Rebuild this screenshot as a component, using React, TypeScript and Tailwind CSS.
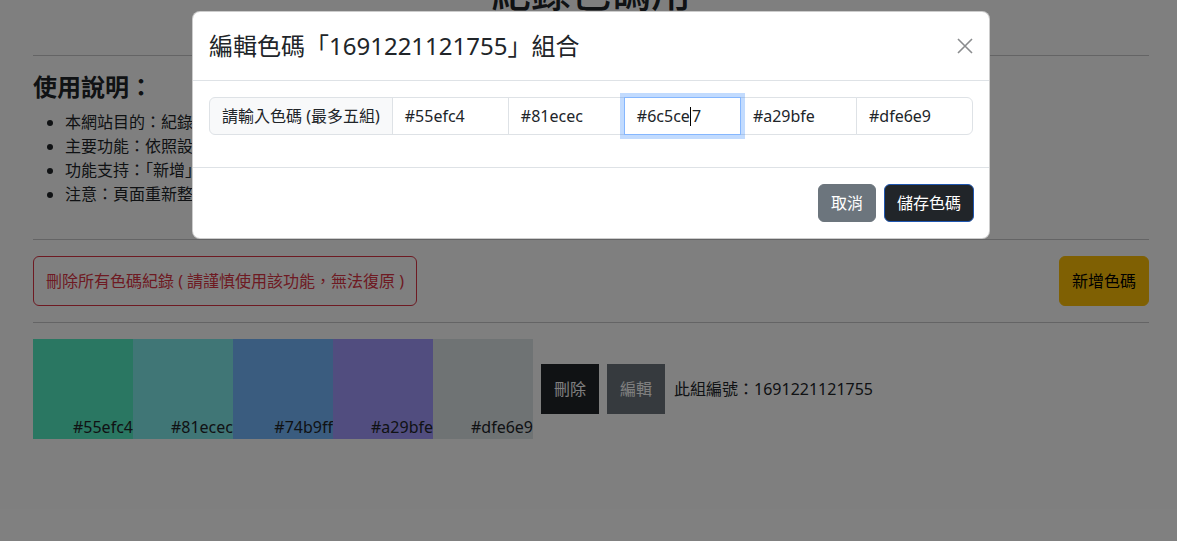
import React from "react";

const swatches = ["#55efc4", "#81ecec", "#74b9ff", "#a29bfe", "#dfe6e9"];
const inputs = ["#55efc4", "#81ecec", "#6c5ce7", "#a29bfe", "#dfe6e9"];

export default function App() {
  return (
    <div className="relative h-[541px] w-full overflow-hidden bg-white font-['Noto_Sans','Noto_Sans_CJK_TC',sans-serif] text-[#212529]">
      <div className="ml-[33px] w-[1116px]">
        <h1 className="mt-[-32px] text-center text-[40px] leading-[48px] font-medium">紀錄色碼用</h1>
        <hr className="mt-[39px] mb-4 border-t border-[#c8c9ca]" />
        <h4 className="mb-[9px] text-[24px] leading-[29px] font-bold">使用說明：</h4>
        <ul className="mb-[33px] list-disc pl-8 text-base leading-6">
          <li>本網站目的：紀錄喜歡的色碼組合，方便日後查詢使用</li>
          <li>主要功能：依照設定的色碼顯示顏色區塊與色碼</li>
          <li>功能支持：「新增」、「編輯」、「刪除」色碼組合</li>
          <li>注意：頁面重新整理後資料仍會保留於瀏覽器中</li>
        </ul>
        <hr className="mb-4 border-t border-[#c8c9ca]" />
        <div className="flex items-center justify-between">
          <button className="rounded-md border border-[#dc3545] px-3 py-3 text-base leading-6 text-[#dc3545]">
            刪除所有色碼紀錄 ( 請謹慎使用該功能，無法復原 )
          </button>
          <button className="rounded-md border border-[#ffc107] bg-[#ffc107] px-3 py-3 text-base leading-6 text-black">
            新增色碼
          </button>
        </div>
        <hr className="my-4 border-t border-[#c8c9ca]" />
        <div className="flex items-center">
          <div className="flex">
            {swatches.map((c) => (
              <div
                key={c}
                className="flex h-[100px] w-[100px] items-end justify-end text-base leading-6"
                style={{ backgroundColor: c }}
              >
                {c}
              </div>
            ))}
          </div>
          <button className="ml-2 border border-[#212529] bg-[#212529] px-3 py-3 text-base leading-6 text-white">刪除</button>
          <button className="ml-2 border border-[#6c757d] bg-[#6c757d] px-3 py-3 text-base leading-6 text-white">編輯</button>
          <span className="ml-[9px] text-base leading-6">此組編號：1691221121755</span>
        </div>
      </div>

      <div className="absolute inset-0 bg-black/50" />

      <div className="absolute left-[192px] top-[11px] w-[798px] rounded-lg border border-black/20 bg-white">
        <div className="flex items-center justify-between border-b border-[#dee2e6] p-4">
          <h5 className="text-[24px] leading-[36px] font-normal">編輯色碼「1691221121755」組合</h5>
          <button className="flex h-4 w-4 items-center justify-center">
            <svg width="16" height="16" viewBox="0 0 16 16">
              <path d="M1 1 L15 15 M15 1 L1 15" stroke="#8a8c8e" strokeWidth="1.6" fill="none" />
            </svg>
          </button>
        </div>
        <div className="border-b border-[#dee2e6] p-4">
          <div className="mb-4 flex h-[38px] w-full rounded-md">
            <div className="flex items-center rounded-l-md border border-[#dee2e6] bg-[#f8f9fa] px-3 text-base leading-6 whitespace-nowrap">
              請輸入色碼 (最多五組)
            </div>
            {inputs.map((v, i) => {
              const focused = i === 2;
              const last = i === inputs.length - 1;
              return (
                <div
                  key={i}
                  className={
                    focused
                      ? "relative z-10 ml-[-1px] flex flex-1 items-center border border-[#86b7fe] bg-white px-3 text-base leading-6 shadow-[0_0_0_4px_rgba(13,110,253,0.25)]"
                      : last
                      ? "ml-[-1px] flex flex-1 items-center rounded-r-md border border-[#dee2e6] bg-white px-3 text-base leading-6"
                      : "ml-[-1px] flex flex-1 items-center border border-[#dee2e6] bg-white px-3 text-base leading-6"
                  }
                >
                  {focused ? (
                    <span className="flex items-center">
                      #6c5ce<span className="mx-[0.5px] inline-block h-[19px] w-px bg-black" />7
                    </span>
                  ) : (
                    v
                  )}
                </div>
              );
            })}
          </div>
        </div>
        <div className="flex justify-end gap-2 py-4 pl-4 pr-[15px]">
          <button className="rounded-md border border-[#6c757d] bg-[#6c757d] px-3 py-[6px] text-base leading-6 text-white">取消</button>
          <button className="rounded-md border border-[#1f56b0] bg-[#212529] px-3 py-[6px] text-base leading-6 text-white">儲存色碼</button>
        </div>
      </div>
    </div>
  );
}
